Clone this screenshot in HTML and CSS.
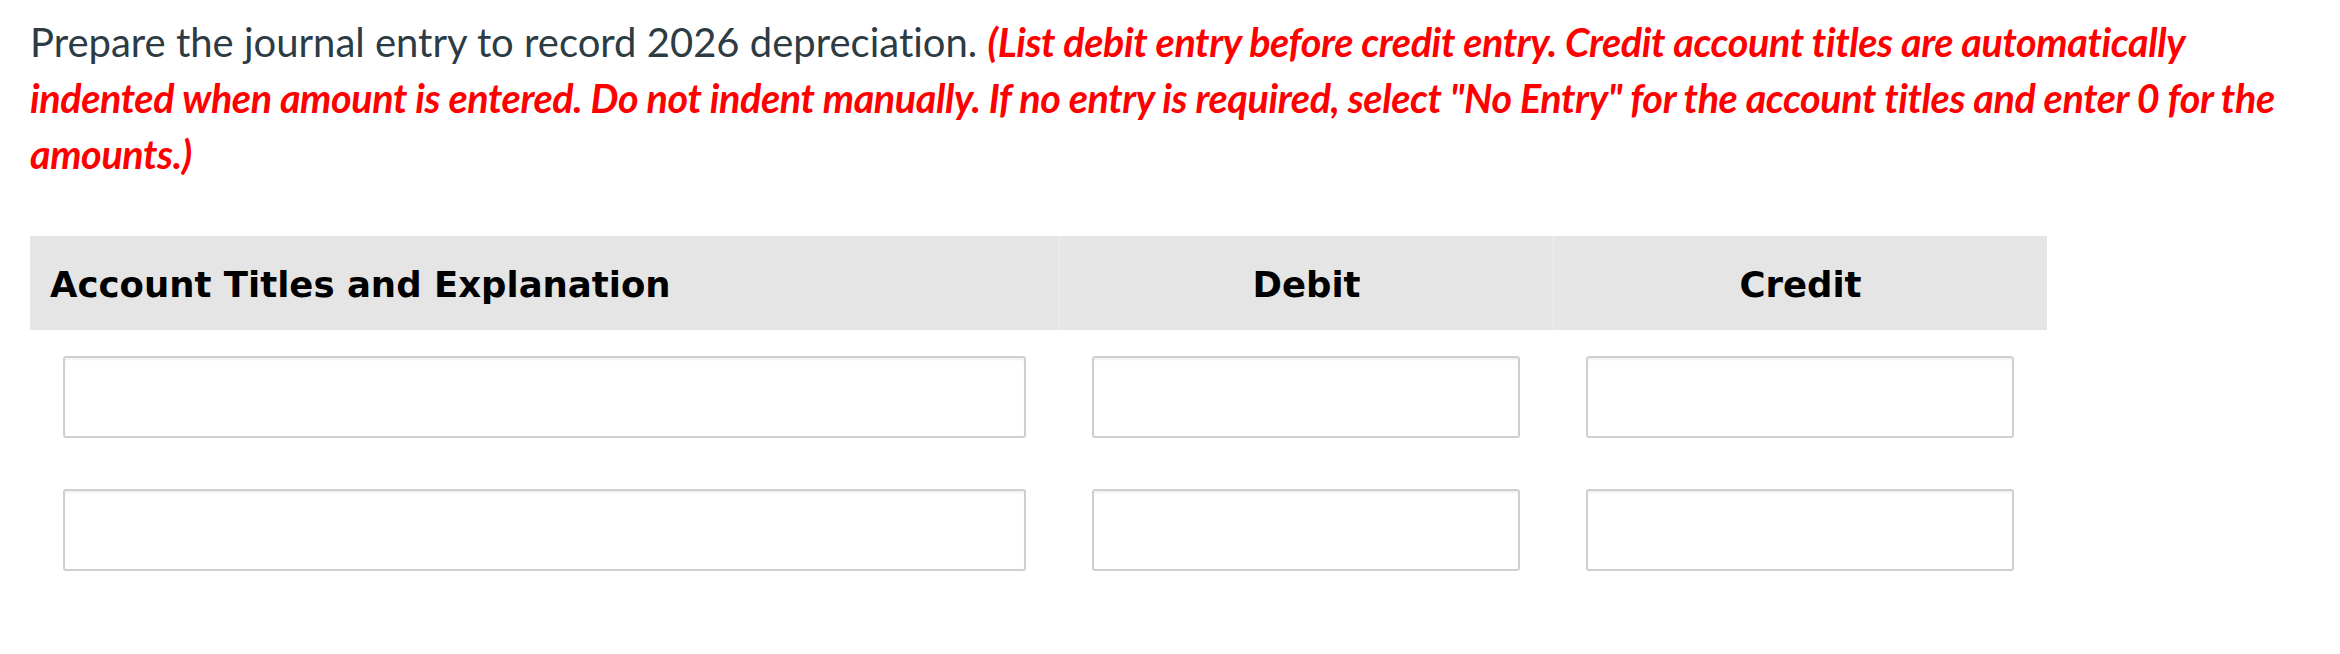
FILE: index.html
```html
<!DOCTYPE html>
<html lang="en">
<head>
<meta charset="utf-8">
<title>Journal entry</title>
<link rel="stylesheet" href="styles.css">
</head>
<body>
<div class="page">
  <p class="prompt">Prepare the journal entry to record 2026 depreciation. <strong class="note">(List debit entry before credit entry. Credit account titles are automatically indented when amount is entered. Do not indent manually. If no entry is required, select "No Entry" for the account titles and enter 0 for the amounts.)</strong></p>
  <div class="journal">
    <div class="head head-left">Account Titles and Explanation</div>
    <div class="head head-sep">Debit</div>
    <div class="head head-sep">Credit</div>

    <div class="cell"><input class="box" type="text" aria-label="Account title 1"></div>
    <div class="cell"><input class="box" type="text" aria-label="Debit 1"></div>
    <div class="cell"><input class="box" type="text" aria-label="Credit 1"></div>

    <div class="cell"><input class="box" type="text" aria-label="Account title 2"></div>
    <div class="cell"><input class="box" type="text" aria-label="Debit 2"></div>
    <div class="cell"><input class="box" type="text" aria-label="Credit 2"></div>
  </div>
</div>
</body>
</html>
```

FILE: styles.css
```css
html, body {
  margin: 0;
  padding: 0;
  background: #ffffff;
}

.page {
  padding: 14px 0 0 30px;
}

.prompt {
  margin: 0 0 54px 0;
  width: 2260px;
  font-family: Lato, "Open Sans", sans-serif;
  font-size: 40px;
  line-height: 55px;
  color: #2d3b45;
  font-variant-ligatures: none;
}

.note {
  font-weight: bold;
  font-style: italic;
  font-size: 39.5px;
  line-height: 55px;
  letter-spacing: -0.4px;
  color: #ff0000;
  font-variant-ligatures: none;
}

.journal {
  display: grid;
  grid-template-columns: 1029px 494px 494px;
  width: 2017px;
}

.head {
  background: #e5e5e5;
  font-family: "DejaVu Sans", Verdana, sans-serif;
  font-weight: bold;
  font-size: 35.5px;
  line-height: 41px;
  height: 94px;
  box-sizing: border-box;
  padding: 28px 0 25px 0;
  color: #000000;
}

.head-left {
  padding-left: 20px;
  text-align: left;
}

.head-sep {
  text-align: center;
  border-left: 1px solid #efefef;
}

.cell {
  padding: 26px 33px 25px 33px;
}

.box {
  display: block;
  box-sizing: border-box;
  width: 100%;
  height: 82px;
  margin: 0;
  padding: 0 10px;
  border: 2px solid #cfcfcf;
  border-radius: 3px;
  background: #ffffff;
  box-shadow: inset 0 2px 2px rgba(0, 0, 0, 0.06);
  font-family: Lato, sans-serif;
  font-size: 30px;
}
```
